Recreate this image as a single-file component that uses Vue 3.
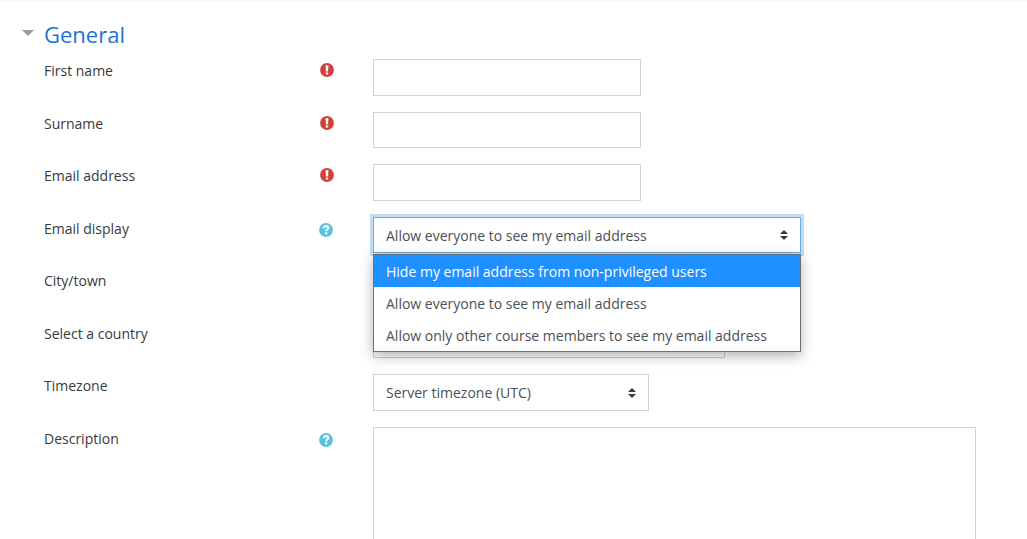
<script setup>
import { ref } from 'vue';

const expanded = ref(true);
const emailDisplay = ref(1);
const highlighted = ref(0);
const timezone = ref('99');

const emailOptions = [
    'Hide my email address from non-privileged users',
    'Allow everyone to see my email address',
    'Allow only other course members to see my email address'
];

const fields = [
    { id: 'firstname', label: 'First name', type: 'text', required: true },
    { id: 'surname', label: 'Surname', type: 'text', required: true },
    { id: 'email', label: 'Email address', type: 'email', required: true },
    { id: 'maildisplay', label: 'Email display', type: 'maildisplay', help: true },
    { id: 'city', label: 'City/town', type: 'text' },
    { id: 'country', label: 'Select a country', type: 'country' },
    { id: 'timezone', label: 'Timezone', type: 'timezone' },
    { id: 'description', label: 'Description', type: 'editor', help: true }
];
</script>

<template>
    <main class="page">
        <form class="profile-form" @submit.prevent>
            <h3 class="section-title">
                <button type="button" class="toggle" :aria-expanded="expanded" @click="expanded = !expanded">
                    <svg class="caret" viewBox="0 0 12 6" aria-hidden="true">
                        <path d="M0 0h12L6 6z" fill="#999" />
                    </svg>
                    <span>General</span>
                </button>
            </h3>

            <div v-if="expanded" class="fields">
                <div v-for="field in fields" :key="field.id" class="row">
                    <div class="label-col">
                        <label :for="field.id">{{ field.label }}</label>
                        <svg v-if="field.required" class="icon" viewBox="0 0 14 14" role="img" aria-label="Required">
                            <circle cx="7" cy="7" r="6.9" fill="#d43f3a" />
                            <path d="M5.6 2.2h2.8L8.100 8.400H5.900zM5.800 9.400h2.400v2.200H5.800z" fill="#fff" />
                        </svg>
                        <button v-if="field.help" type="button" class="help" :aria-label="'Help with ' + field.label">
                            <svg class="icon" viewBox="0 0 14 14" aria-hidden="true">
                                <circle cx="7" cy="7" r="6.9" fill="#5bc0de" />
                                <path d="M4.7 5.2C4.8 3.8 5.7 3.1 7 3.1c1.4 0 2.3.8 2.3 1.9C9.3 6.5 7.1 6.5 7.1 8.2"
                                    fill="none" stroke="#fff" stroke-width="2.1" />
                                <path d="M6 9.2h2.200v2.200H6z" fill="#fff" />
                            </svg>
                        </button>
                    </div>

                    <div class="control-col">
                        <div v-if="field.type === 'maildisplay'" class="select-wrap mail-select">
                            <select :id="field.id" v-model="emailDisplay" class="control focused">
                                <option v-for="(text, i) in emailOptions" :key="i" :value="i">{{ text }}</option>
                            </select>
                            <svg class="arrows" viewBox="0 0 8 10" aria-hidden="true">
                                <path d="M4 0l4 4H0zM4 10L0 6h8z" fill="#343a40" />
                            </svg>
                            <ul class="dropdown" role="listbox" aria-label="Email display">
                                <li v-for="(text, i) in emailOptions" :key="i" role="option"
                                    :aria-selected="i === emailDisplay" :class="{ active: i === highlighted }"
                                    @mouseenter="highlighted = i" @click="emailDisplay = i">
                                    {{ text }}
                                </li>
                            </ul>
                        </div>
                        <div v-else-if="field.type === 'country'" class="select-wrap country-select">
                            <select :id="field.id" class="control"></select>
                        </div>
                        <div v-else-if="field.type === 'timezone'" class="select-wrap timezone-select">
                            <select :id="field.id" v-model="timezone" class="control">
                                <option value="99">Server timezone (UTC)</option>
                            </select>
                            <svg class="arrows" viewBox="0 0 8 10" aria-hidden="true">
                                <path d="M4 0l4 4H0zM4 10L0 6h8z" fill="#343a40" />
                            </svg>
                        </div>
                        <textarea v-else-if="field.type === 'editor'" :id="field.id" class="control editor"></textarea>
                        <input v-else :id="field.id" :type="field.type" class="control text-input" />
                    </div>
                </div>
            </div>
        </form>
    </main>
</template>

<style>
body {
    background: #fff;
    overflow: hidden;
}
</style>

<style scoped>
.page {
    padding: 20px 51px 0 22px;
    background: linear-gradient(#f6f6f6, #fff 4px);
    color: #373a3c;
    font-family: "Segoe UI", "Open Sans", "Noto Sans", sans-serif;
    font-size: 14px;
    line-height: 22px;
}

.section-title {
    margin: 0 0 11px;
    font-weight: 400;
}

.toggle {
    display: flex;
    align-items: center;
    gap: 10px;
    border: 0;
    padding: 0;
    background: none;
    color: #1a73d0;
    font: inherit;
    font-size: 22px;
    line-height: 28px;
    cursor: pointer;
}

.caret {
    width: 12px;
    height: 6px;
    margin-bottom: 2px;
}

.fields {
    display: flex;
    flex-direction: column;
    gap: 16px;
    padding-left: 22px;
}

.row {
    display: grid;
    grid-template-columns: 329px 1fr;
    height: 37px;
}

.row:nth-child(even) {
    height: 36px;
}

.row:last-child {
    height: auto;
}

.label-col {
    display: flex;
    justify-content: space-between;
    align-items: flex-start;
    padding: 1px 39px 0 0;
}

.icon {
    display: block;
    width: 14px;
    height: 14px;
    margin-top: 3px;
}

.help {
    border: 0;
    padding: 2px 1px 0 0;
    background: none;
    cursor: pointer;
}

.control {
    display: block;
    box-sizing: border-box;
    width: 100%;
    height: 100%;
    margin: 0;
    border: 1px solid #ced4da;
    border-radius: 0;
    padding: 0 12px;
    background: #fff;
    color: #495057;
    font: inherit;
    outline: none;
    appearance: none;
}

.text-input {
    max-width: 268px;
}

.select-wrap {
    position: relative;
    height: 100%;
}

.mail-select {
    max-width: 428px;
}

.country-select {
    max-width: 352px;
}

.timezone-select {
    max-width: 276px;
}

.focused {
    border-color: #66afe9;
    padding-top: 2px;
    box-shadow: 0 0 0 3px #c2dcf3;
}

.arrows {
    position: absolute;
    top: 50%;
    right: 13px;
    width: 8px;
    height: 10px;
    margin-top: -5px;
    pointer-events: none;
}

.dropdown {
    position: absolute;
    z-index: 1;
    top: 100%;
    left: 0;
    right: 0;
    margin: 1px 0 0;
    border: 1px solid #707070;
    padding: 0;
    background: #fff;
    box-shadow: 0 4px 12px rgba(0, 0, 0, 0.3);
    color: #495057;
    line-height: 30px;
    list-style: none;
}

.dropdown li {
    padding: 2px 12px 0;
    white-space: nowrap;
}

.dropdown .active {
    background: #1e90ff;
    color: #fff;
}

.editor {
    height: 290px;
    resize: none;
}
</style>
